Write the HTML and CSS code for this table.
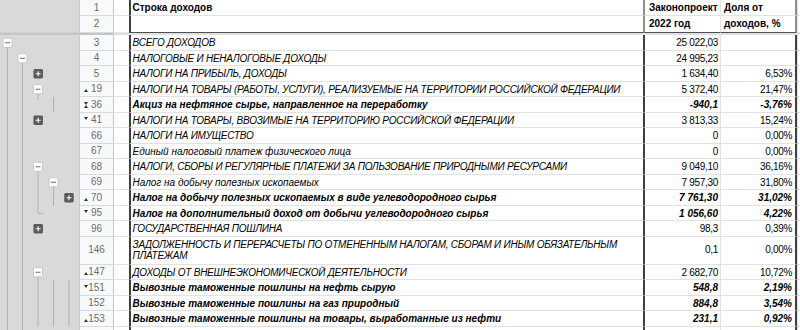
FILE: index.html
```html
<!DOCTYPE html>
<html lang="ru">
<head>
<meta charset="utf-8">
<title>Доходы</title>
<link rel="stylesheet" href="styles.css">
</head>
<body>
<svg class="gutter" width="80" height="330" viewBox="0 0 80 330">
  <defs>
    <g id="minus">
      <rect x="-4.5" y="-4.5" width="9" height="9" rx="1.2" fill="#fff" stroke="#bfbfbf" stroke-width="0.8"/>
      <path d="M-2.5 0H2.5" stroke="#6b6b6b" stroke-width="1"/>
    </g>
    <g id="plus">
      <rect x="-4.75" y="-4.75" width="9.5" height="9.5" rx="1.4" fill="#5b5b5b"/>
      <path d="M-2.5 0H2.5M0 -2.5V2.5" stroke="#fff" stroke-width="1.1"/>
    </g>
  </defs>
  <rect width="80" height="330" fill="#d9d9d9"/>
  <rect y="32.5" width="80" height="2.5" fill="#c6c6c6"/>
  <path d="M79.5 0V330" stroke="#c9c9c9"/>
  <g stroke="#b3b3b3" stroke-width="1" fill="none">
    <path d="M7.5 47V330"/>
    <path d="M22.5 62.5V330"/>
    <path d="M38 93.5V100"/>
    <path d="M53.5 97V112"/>
    <path d="M38 171V213.5H43"/>
    <path d="M53.5 186.5V206"/>
    <path d="M38 276.5V326.5"/>
    <path d="M53.5 280V326.5"/>
    <path d="M69 280V326.5"/>
  </g>
  <use href="#minus" x="7.6" y="42.75"/>
  <use href="#minus" x="22.5" y="58.25"/>
  <use href="#plus" x="38.2" y="73.75"/>
  <use href="#minus" x="38" y="89.25"/>
  <use href="#plus" x="38.2" y="120.25"/>
  <use href="#minus" x="38" y="166.75"/>
  <use href="#minus" x="53.5" y="182.25"/>
  <use href="#plus" x="69" y="197.75"/>
  <use href="#plus" x="38.2" y="228.75"/>
  <use href="#minus" x="38" y="272.25"/>
</svg>

<div class="sheet">
  <div class="row head h1">
    <div class="rh">1</div><div class="ca"></div>
    <div class="cb">Строка доходов</div>
    <div class="cc">Законопроект</div>
    <div class="cd">Доля от</div>
    <div class="ce"></div>
  </div>
  <div class="row head h2">
    <div class="rh">2</div><div class="ca"></div>
    <div class="cb"></div>
    <div class="cc">2022 год</div>
    <div class="cd">доходов, %</div>
    <div class="ce"></div>
  </div>
  <div class="divider"><div class="dv-rh"></div><div class="dv-main"></div></div>

  <div class="row">
    <div class="rh">3</div><div class="ca"></div>
    <div class="cb caps">ВСЕГО ДОХОДОВ</div>
    <div class="cc">25 022,03</div>
    <div class="cd"></div>
    <div class="ce"></div>
  </div>
  <div class="row">
    <div class="rh">4</div><div class="ca"></div>
    <div class="cb caps">НАЛОГОВЫЕ И НЕНАЛОГОВЫЕ ДОХОДЫ</div>
    <div class="cc">24 995,23</div>
    <div class="cd"></div>
    <div class="ce"></div>
  </div>
  <div class="row">
    <div class="rh">5</div><div class="ca"></div>
    <div class="cb caps">НАЛОГИ НА ПРИБЫЛЬ, ДОХОДЫ</div>
    <div class="cc">1 634,40</div>
    <div class="cd">6,53%</div>
    <div class="ce"></div>
  </div>
  <div class="row">
    <div class="rh"><span class="tri up"></span>19</div><div class="ca"></div>
    <div class="cb caps">НАЛОГИ НА ТОВАРЫ (РАБОТЫ, УСЛУГИ), РЕАЛИЗУЕМЫЕ НА ТЕРРИТОРИИ РОССИЙСКОЙ ФЕДЕРАЦИИ</div>
    <div class="cc">5 372,40</div>
    <div class="cd">21,47%</div>
    <div class="ce"></div>
  </div>
  <div class="row bold">
    <div class="rh"><span class="tri dn"></span><span class="tri up"></span>36</div><div class="ca"></div>
    <div class="cb">Акциз на нефтяное сырье, направленное на переработку</div>
    <div class="cc">-940,1</div>
    <div class="cd">-3,76%</div>
    <div class="ce"></div>
  </div>
  <div class="row">
    <div class="rh"><span class="tri dn"></span>41</div><div class="ca"></div>
    <div class="cb caps">НАЛОГИ НА ТОВАРЫ, ВВОЗИМЫЕ НА ТЕРРИТОРИЮ РОССИЙСКОЙ ФЕДЕРАЦИИ</div>
    <div class="cc">3 813,33</div>
    <div class="cd">15,24%</div>
    <div class="ce"></div>
  </div>
  <div class="row">
    <div class="rh">66</div><div class="ca"></div>
    <div class="cb caps">НАЛОГИ НА ИМУЩЕСТВО</div>
    <div class="cc">0</div>
    <div class="cd">0,00%</div>
    <div class="ce"></div>
  </div>
  <div class="row">
    <div class="rh">67</div><div class="ca"></div>
    <div class="cb">Единый налоговый платеж физического лица</div>
    <div class="cc">0</div>
    <div class="cd">0,00%</div>
    <div class="ce"></div>
  </div>
  <div class="row">
    <div class="rh">68</div><div class="ca"></div>
    <div class="cb caps">НАЛОГИ, СБОРЫ И РЕГУЛЯРНЫЕ ПЛАТЕЖИ ЗА ПОЛЬЗОВАНИЕ ПРИРОДНЫМИ РЕСУРСАМИ</div>
    <div class="cc">9 049,10</div>
    <div class="cd">36,16%</div>
    <div class="ce"></div>
  </div>
  <div class="row">
    <div class="rh">69</div><div class="ca"></div>
    <div class="cb">Налог на добычу полезных ископаемых</div>
    <div class="cc">7 957,30</div>
    <div class="cd">31,80%</div>
    <div class="ce"></div>
  </div>
  <div class="row bold">
    <div class="rh"><span class="tri up"></span>70</div><div class="ca"></div>
    <div class="cb">Налог на добычу полезных ископаемых в виде углеводородного сырья</div>
    <div class="cc">7 761,30</div>
    <div class="cd">31,02%</div>
    <div class="ce"></div>
  </div>
  <div class="row bold">
    <div class="rh"><span class="tri dn"></span>95</div><div class="ca"></div>
    <div class="cb">Налог на дополнительный доход от добычи углеводородного сырья</div>
    <div class="cc">1 056,60</div>
    <div class="cd">4,22%</div>
    <div class="ce"></div>
  </div>
  <div class="row">
    <div class="rh">96</div><div class="ca"></div>
    <div class="cb caps">ГОСУДАРСТВЕННАЯ ПОШЛИНА</div>
    <div class="cc">98,3</div>
    <div class="cd">0,39%</div>
    <div class="ce"></div>
  </div>
  <div class="row tall">
    <div class="rh">146</div><div class="ca"></div>
    <div class="cb caps wrap">ЗАДОЛЖЕННОСТЬ И ПЕРЕРАСЧЕТЫ ПО ОТМЕНЕННЫМ НАЛОГАМ, СБОРАМ И ИНЫМ ОБЯЗАТЕЛЬНЫМ ПЛАТЕЖАМ</div>
    <div class="cc">0,1</div>
    <div class="cd">0,00%</div>
    <div class="ce"></div>
  </div>
  <div class="row">
    <div class="rh"><span class="tri up"></span>147</div><div class="ca"></div>
    <div class="cb caps">ДОХОДЫ ОТ ВНЕШНЕЭКОНОМИЧЕСКОЙ ДЕЯТЕЛЬНОСТИ</div>
    <div class="cc">2 682,70</div>
    <div class="cd">10,72%</div>
    <div class="ce"></div>
  </div>
  <div class="row bold">
    <div class="rh"><span class="tri dn"></span>151</div><div class="ca"></div>
    <div class="cb">Вывозные таможенные пошлины на нефть сырую</div>
    <div class="cc">548,8</div>
    <div class="cd">2,19%</div>
    <div class="ce"></div>
  </div>
  <div class="row bold">
    <div class="rh">152</div><div class="ca"></div>
    <div class="cb">Вывозные таможенные пошлины на газ природный</div>
    <div class="cc">884,8</div>
    <div class="cd">3,54%</div>
    <div class="ce"></div>
  </div>
  <div class="row bold">
    <div class="rh"><span class="tri up"></span>153</div><div class="ca"></div>
    <div class="cb">Вывозные таможенные пошлины на товары, выработанные из нефти</div>
    <div class="cc">231,1</div>
    <div class="cd">0,92%</div>
    <div class="ce"></div>
  </div>
  <div class="row">
    <div class="rh"></div><div class="ca"></div>
    <div class="cb"></div>
    <div class="cc"></div>
    <div class="cd"></div>
    <div class="ce"></div>
  </div>
</div>
</body>
</html>
```

FILE: styles.css
```css
* {
  box-sizing: border-box;
  margin: 0;
  padding: 0;
}

html, body {
  width: 800px;
  height: 330px;
  overflow: hidden;
  background: #fff;
}

body {
  display: flex;
  font-family: "Liberation Sans", Arial, sans-serif;
  font-size: 10px;
  color: #000;
}

.gutter {
  flex: none;
  display: block;
  width: 80px;
  height: 330px;
}

.sheet {
  flex: 1;
  display: flex;
  flex-direction: column;
  min-width: 0;
}

.row {
  display: flex;
  flex: none;
  height: 15.5px;
}

.row.tall {
  height: 28px;
}

.row > div {
  flex: none;
  border-bottom: 1px solid #e2e2e2;
  line-height: 11.5px;
  white-space: nowrap;
  overflow: hidden;
}

.rh {
  position: relative;
  width: 34px;
  display: flex;
  align-items: center;
  justify-content: center;
  background: #f8f9fa;
  border-right: 1px solid #c7c7c7;
  color: #6b6b6b;
  font-size: 10px;
}

.row > .rh {
  border-bottom-color: #dadada;
}

.ca {
  width: 14.5px;
}

.cb {
  width: 514.5px;
  display: flex;
  align-items: flex-end;
  padding: 0 2px 1px 2px;
  border-left: 2px solid #404040;
  font-style: italic;
}

.cb.caps {
  letter-spacing: -0.24px;
}

.cc {
  width: 77px;
  display: flex;
  align-items: flex-end;
  justify-content: flex-end;
  padding: 0 2px 1px 2px;
  border-left: 2px solid #404040;
  letter-spacing: -0.3px;
}

.cd {
  width: 77px;
  display: flex;
  align-items: flex-end;
  justify-content: flex-end;
  padding: 0 3px 1px 2px;
  border-left: 1px solid #e2e2e2;
  border-right: 2px solid #404040;
  letter-spacing: -0.3px;
}

.row > .ce {
  flex: 1;
  border-left: 1px solid #e2e2e2;
}

.row.bold .cb,
.row.bold .cc,
.row.bold .cd {
  font-weight: bold;
  font-style: italic;
  letter-spacing: 0;
}

.row.tall .cb,
.row.tall .cc,
.row.tall .cd {
  align-items: center;
}

.row > .cb.wrap {
  white-space: normal;
  padding-bottom: 0;
}

/* header rows */
.row.head.h1 {
  height: 16px;
}

.row.head.h2 {
  height: 16.5px;
}

.row.head .cb,
.row.head .cc,
.row.head .cd {
  font-weight: bold;
  font-style: normal;
  justify-content: flex-start;
  padding-bottom: 2px;
  letter-spacing: 0;
}

.row.head .cc {
  padding-left: 4px;
  border-left: 2px solid #8f8f8f;
}

.row.head .cd {
  padding-left: 3px;
  border-right-color: #8f8f8f;
}

.row.head.h2 .cb,
.row.head.h2 .cc,
.row.head.h2 .cd {
  border-bottom: 1.5px solid #505050;
}

.divider {
  display: flex;
  flex: none;
  height: 2.5px;
}

.dv-rh {
  width: 34px;
  background: #c4c4c4;
}

.dv-main {
  flex: 1;
  background: #dde1e6;
}

/* hidden-row markers */
.tri {
  position: absolute;
  left: 3.5px;
  width: 0;
  height: 0;
  border-left: 2px solid transparent;
  border-right: 2px solid transparent;
}

.tri.up {
  top: 7.5px;
  border-bottom: 3px solid #333;
}

.tri.dn {
  top: 4.5px;
  border-top: 3px solid #333;
}
```
